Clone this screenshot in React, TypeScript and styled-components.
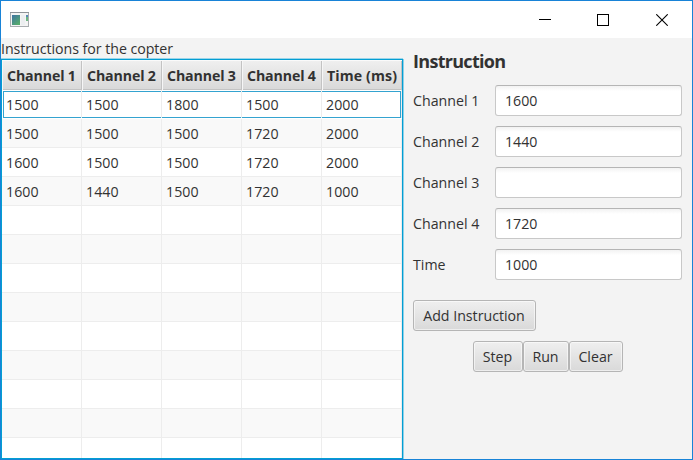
import React, { useState } from "react";
import styled, { createGlobalStyle } from "styled-components";

const GlobalStyle = createGlobalStyle`
  *, *::before, *::after { box-sizing: border-box; }
  body { margin: 0; overflow: hidden; }
`;

const Window = styled.div`
  width: 693px;
  height: 460px;
  display: flex;
  flex-direction: column;
  border: 1px solid #1883d7;
  background: #f3f3f3;
  color: #323232;
  font: 14.2px/20px "Open Sans", "Noto Sans", sans-serif;
  white-space: nowrap;
`;

const TitleBar = styled.header`
  height: 37px;
  flex: none;
  display: flex;
  align-items: center;
  justify-content: space-between;
  padding-left: 9px;
  background: #fff;
`;

const WindowControls = styled.div`
  display: flex;
`;

const ControlButton = styled.button`
  width: 58px;
  height: 37px;
  padding: 0;
  border: 0;
  background: transparent;
  display: grid;
  place-items: center;
  &:last-child { width: 60px; }
`;

const Content = styled.main`
  flex: 1;
  min-height: 0;
  display: flex;
`;

const TablePane = styled.section`
  width: 403px;
  display: flex;
  flex-direction: column;
`;

const Caption = styled.div`
  height: 20px;
  line-height: 21px;
  letter-spacing: -0.04px;
`;

const Table = styled.div`
  flex: 1;
  min-height: 0;
  width: 402px;
  overflow: hidden;
  display: flex;
  flex-direction: column;
  border: 1px solid #039ed3;
  box-shadow: 0 -1px 0 #9bd5e9, 1px 0 0 #8fd0e7;
  background: #fff;
  margin-top: 1px;
`;

const HeaderRow = styled.div`
  flex: none;
  height: 30px;
  display: grid;
  grid-template-columns: repeat(5, 80px);
  background: linear-gradient(#efefef, #d9d9d9);
  border-bottom: 1px solid #c3c3c3;
  border-top: 1px solid #fafafa;
`;

const HeaderCell = styled.div<{ $wide: boolean }>`
  font-weight: 700;
  line-height: 30px;
  padding-left: 5px;
  letter-spacing: ${(p) => (p.$wide ? 0.1 : -0.14)}px;
  border-right: 1px solid #c3c3c3;
  box-shadow: inset 1px 0 0 #f6f6f6;
`;

const Row = styled.div<{ $striped: boolean; $focused: boolean }>`
  flex: none;
  position: relative;
  height: 29px;
  display: grid;
  grid-template-columns: repeat(5, 80px);
  background: ${(p) => (p.$striped ? "#f9f9f9" : "#fff")};
  border-bottom: 1px solid ${(p) => (p.$focused ? "#fff" : "#ededed")};
  ${(p) =>
    p.$focused &&
    `&::before {
      content: "";
      position: absolute;
      inset: 1px 1px 0 1px;
      border: 1px solid #34a3d0;
    }`}
`;

const Cell = styled.div`
  position: relative;
  padding-left: 4px;
  height: 28px;
  line-height: 29px;
  letter-spacing: 0.05px;
  border-right: 1px solid #ededed;
`;

const FormPane = styled.section`
  flex: 1;
  padding: 10px 10px 0 9px;
`;

const Heading = styled.h1`
  margin: 0 0 11px;
  height: 26px;
  font-size: 18px;
  line-height: 27px;
  font-weight: 700;
  letter-spacing: -0.7px;
`;

const Fields = styled.div`
  display: grid;
  gap: 10px;
`;

const Field = styled.label`
  display: grid;
  grid-template-columns: 82px 187px;
  align-items: center;
  height: 31px;
`;

const Input = styled.input`
  width: 187px;
  height: 31px;
  padding: 0 9px;
  border: 1px solid #c8c8c8;
  border-top-color: #b5b5b5;
  border-radius: 3px;
  background: linear-gradient(#f2f2f2, #fff 5px);
  color: inherit;
  font: inherit;
  outline: none;
`;

const Button = styled.button<{ $width: number }>`
  width: ${(p) => p.$width}px;
  height: 31px;
  padding: 0 1px 0 0;
  border: 1px solid #b5b5b5;
  border-radius: 3px;
  background: linear-gradient(#efefef, #d9d9d9);
  box-shadow: inset 0 0 0 1px rgba(255, 255, 255, 0.55);
  color: inherit;
  font: inherit;
`;

const Actions = styled.div`
  margin-top: 20px;
`;

const RunActions = styled.div`
  display: flex;
  margin: 10px 0 0 60px;
`;

const columns = ["Channel 1", "Channel 2", "Channel 3", "Channel 4", "Time (ms)"];
const instructions = [
  ["1500", "1500", "1800", "1500", "2000"],
  ["1500", "1500", "1500", "1720", "2000"],
  ["1600", "1500", "1500", "1720", "2000"],
  ["1600", "1440", "1500", "1720", "1000"],
];
const rows = Array.from({ length: 13 }, (_, i) => instructions[i] ?? ["", "", "", "", ""]);
const fields = [
  ["Channel 1", "1600"],
  ["Channel 2", "1440"],
  ["Channel 3", ""],
  ["Channel 4", "1720"],
  ["Time", "1000"],
];

function AppIcon() {
  return (
    <svg width="20" height="17" viewBox="0 0 20 17" shapeRendering="crispEdges">
      <defs>
        <linearGradient id="screen" x1="0" y1="0" x2="0.7" y2="1">
          <stop offset="0" stopColor="#3f73a3" />
          <stop offset="1" stopColor="#55ab6c" />
        </linearGradient>
      </defs>
      <rect x="0.5" y="1.5" width="18" height="14" fill="#f4f4f4" stroke="#a9adb0" />
      <rect x="0" y="1" width="19" height="1" fill="#8e9398" />
      <rect x="2" y="4" width="8" height="10" fill="url(#screen)" />
      <rect x="11" y="4" width="4" height="10" fill="#eceef0" />
      <rect x="16" y="4" width="2" height="2" fill="#5688b5" />
      <rect x="16" y="6" width="2" height="4" fill="#6db682" />
    </svg>
  );
}

function ControlIcon({ path, crisp = true }: { path: string; crisp?: boolean }) {
  return (
    <svg width="12" height="12" viewBox="0 0 12 12" shapeRendering={crisp ? "crispEdges" : "auto"}>
      <path d={path} fill="none" stroke="#000" strokeWidth={crisp ? 1 : 1.1} />
    </svg>
  );
}

export default function App() {
  const [values, setValues] = useState(fields.map(([, value]) => value));
  return (
    <>
      <GlobalStyle />
      <Window>
        <TitleBar>
          <AppIcon />
          <WindowControls>
            <ControlButton aria-label="Minimize"><ControlIcon path="M0 5.5H12" /></ControlButton>
            <ControlButton aria-label="Maximize"><ControlIcon path="M.5 .5H11.5V11.5H.5Z" /></ControlButton>
            <ControlButton aria-label="Close"><ControlIcon path="M.3 .3L11.7 11.7M11.7 .3L.3 11.7" crisp={false} /></ControlButton>
          </WindowControls>
        </TitleBar>
        <Content>
          <TablePane>
            <Caption>Instructions for the copter</Caption>
            <Table>
              <HeaderRow>
                {columns.map((name, i) => <HeaderCell key={name} $wide={i === 4}>{name}</HeaderCell>)}
              </HeaderRow>
              {rows.map((cells, i) => (
                <Row key={i} $striped={i % 2 === 1} $focused={i === 0}>
                  {cells.map((value, j) => <Cell key={j}>{value}</Cell>)}
                </Row>
              ))}
            </Table>
          </TablePane>
          <FormPane>
            <Heading>Instruction</Heading>
            <Fields>
              {fields.map(([label], i) => (
                <Field key={label}>
                  <span>{label}</span>
                  <Input
                    value={values[i]}
                    onChange={(e) => setValues(values.map((v, k) => (k === i ? e.target.value : v)))}
                  />
                </Field>
              ))}
            </Fields>
            <Actions>
              <Button $width={123}>Add Instruction</Button>
              <RunActions>
                <Button $width={50}>Step</Button>
                <Button $width={46}>Run</Button>
                <Button $width={54}>Clear</Button>
              </RunActions>
            </Actions>
          </FormPane>
        </Content>
      </Window>
    </>
  );
}
